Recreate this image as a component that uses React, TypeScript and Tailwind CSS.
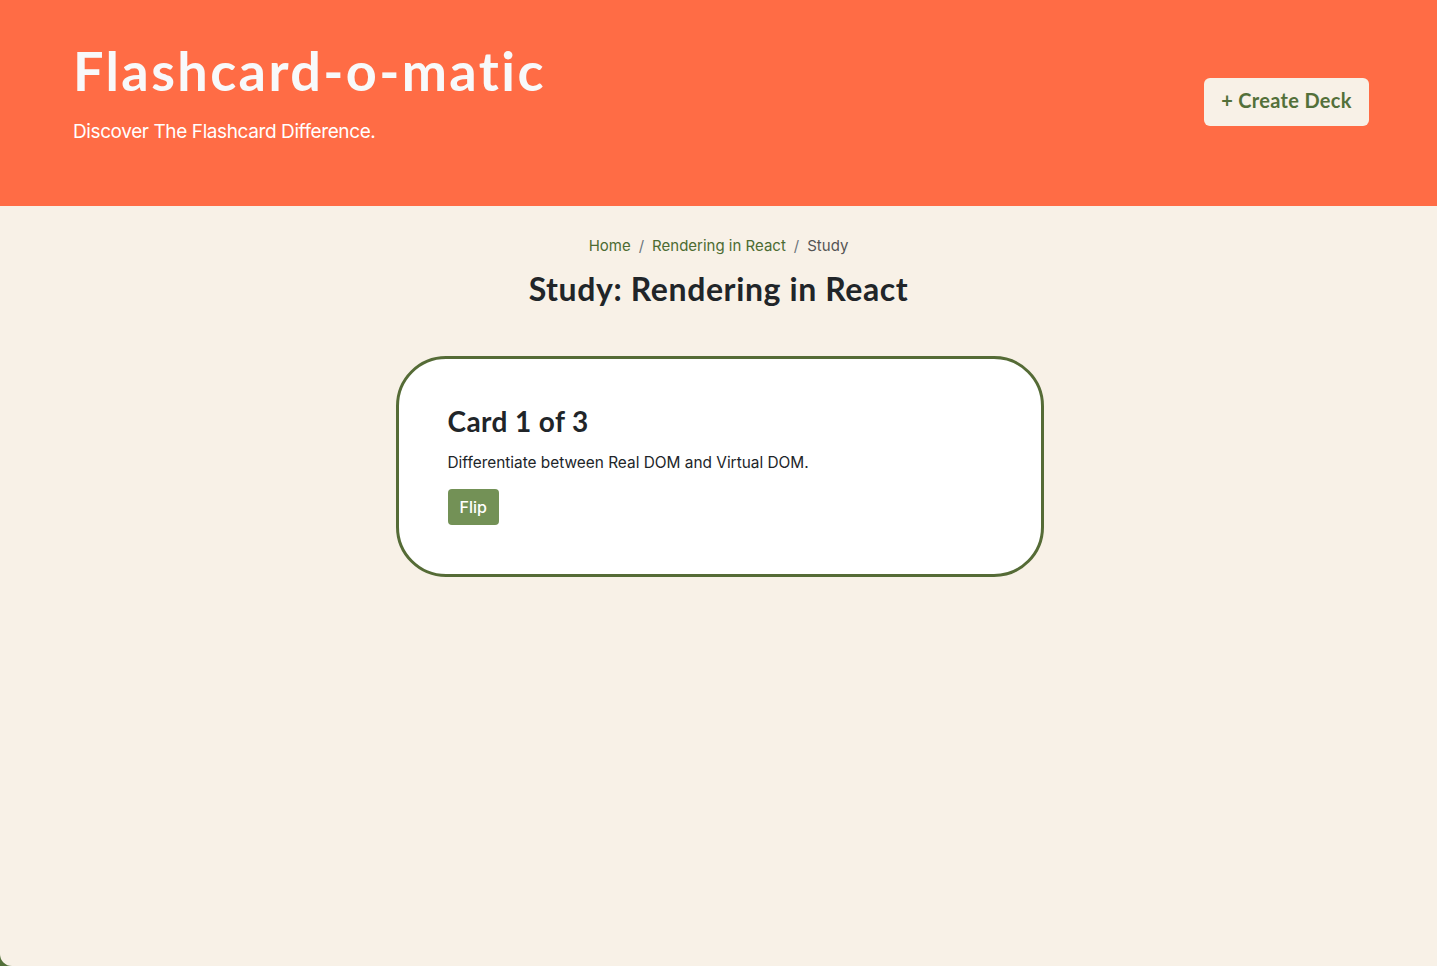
import React from 'react';

const heading = "font-['Lato','Noto_Sans',sans-serif]";
const body = "font-['Inter','Liberation_Sans',sans-serif]";

const Header: React.FC = () => (
  <header className="bg-[#ff6c45] h-[206px] flex justify-between items-start px-[73px] pt-[38px]">
    <div>
      <h1 className={`${heading} text-[54px] leading-[66px] font-bold text-[#f8f9fa] tracking-[2.4px]`}>
        Flashcard-o-matic
      </h1>
      <p className={`${body} text-[19px] text-white mt-[14px] tracking-[-0.4px]`}>Discover The Flashcard Difference.</p>
    </div>
    <button
      className={`${heading} mt-[40px] mr-[-5px] w-[165px] h-[48px] pb-[4px] rounded-[6px] bg-[#f8f1e7] text-[#53703a] text-[20px] font-bold tracking-[0.3px]`}
    >
      + Create Deck
    </button>
  </header>
);

const Breadcrumb: React.FC = () => (
  <nav className={`${body} flex justify-center items-center gap-[8px] text-[15px] text-[#4c6b32]`}>
    <a href="#">Home</a>
    <span className="text-[#6c757d]">/</span>
    <a href="#">Rendering in React</a>
    <span className="text-[#6c757d]">/</span>
    <span className="text-[#555]">Study</span>
  </nav>
);

export default function App() {
  return (
    <div className="bg-[#53703a]">
      <div className="min-h-screen bg-[#f8f1e7] rounded-bl-[12px]">
        <Header />
        <main className="flex flex-col items-center pt-[29px]">
          <Breadcrumb />
          <h2 className={`${heading} mt-[7px] text-[32px] font-bold text-[#212529] tracking-[0.6px]`}>
            Study: Rendering in React
          </h2>
          <section className="mt-[43px] ml-[2px] w-[648px] h-[221px] bg-white border-[3px] border-[#556b36] rounded-[50px] px-[49px] pt-[41px]">
            <h4 className={`${heading} text-[28px] font-bold text-[#212529] tracking-[0.4px]`}>Card 1 of 3</h4>
            <p className={`${body} mt-[9px] text-[15.4px] text-[#212529]`}>
              Differentiate between Real DOM and Virtual DOM.
            </p>
            <button className={`${body} mt-[15px] h-[36px] px-[12px] rounded-[4px] bg-[#739156] text-white text-[16px] font-medium`}>
              Flip
            </button>
          </section>
        </main>
      </div>
    </div>
  );
}
